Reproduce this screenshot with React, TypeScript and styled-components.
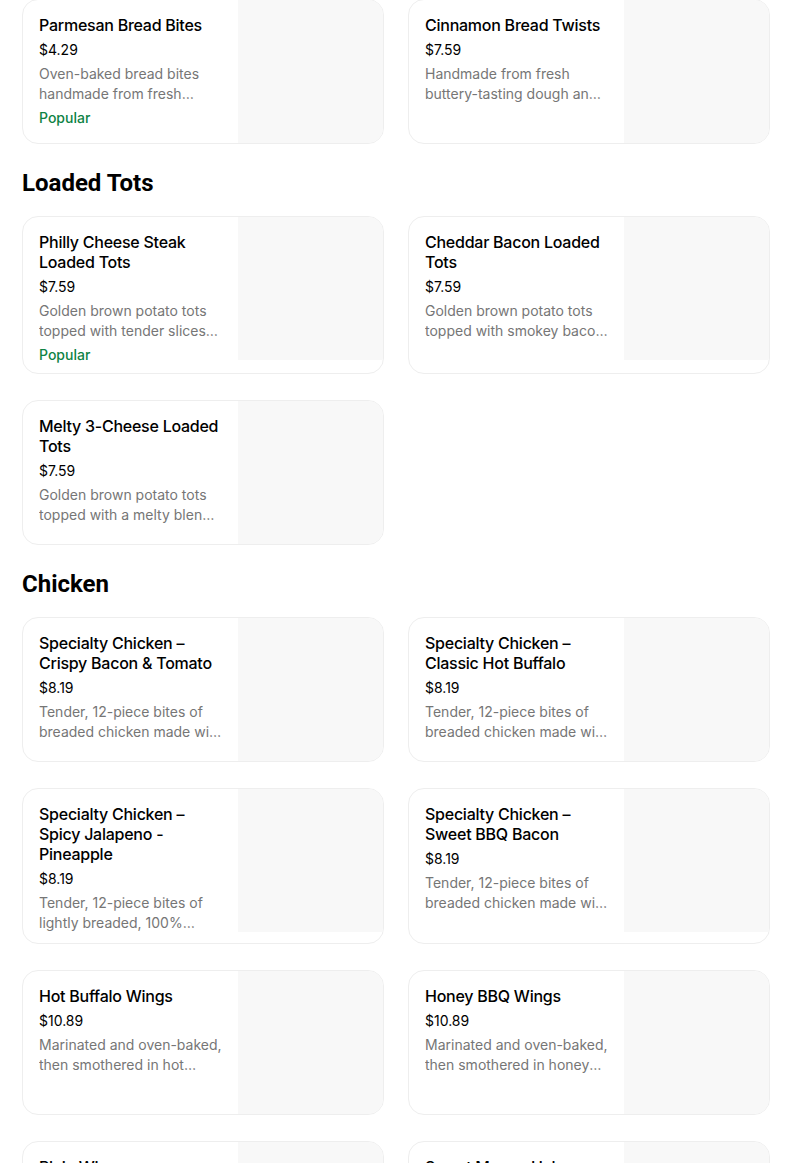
import styled, { createGlobalStyle } from "styled-components";

type Item = {
  name: string;
  price: string;
  description: string;
  popular?: boolean;
};

type Section = {
  title?: string;
  items: Item[];
};

const menu: Section[] = [
  {
    items: [
      {
        name: "Parmesan Bread Bites",
        price: "$4.29",
        description:
          "Oven-baked bread bites handmade from fresh dough, topped with garlic and parmesan.",
        popular: true,
      },
      {
        name: "Cinnamon Bread Twists",
        price: "$7.59",
        description:
          "Handmade from fresh buttery-tasting dough and baked to a golden brown.",
      },
    ],
  },
  {
    title: "Loaded Tots",
    items: [
      {
        name: "Philly Cheese Steak Loaded Tots",
        price: "$7.59",
        description:
          "Golden brown potato tots topped with tender slices of steak, onions and green peppers.",
        popular: true,
      },
      {
        name: "Cheddar Bacon Loaded Tots",
        price: "$7.59",
        description:
          "Golden brown potato tots topped with smokey bacon, cheddar cheese and ranch.",
      },
      {
        name: "Melty 3-Cheese Loaded Tots",
        price: "$7.59",
        description:
          "Golden brown potato tots topped with a melty blend of three cheeses.",
      },
    ],
  },
  {
    title: "Chicken",
    items: [
      {
        name: "Specialty Chicken – Crispy Bacon & Tomato",
        price: "$8.19",
        description:
          "Tender, 12-piece bites of breaded chicken made with 100% white meat, topped with bacon.",
      },
      {
        name: "Specialty Chicken – Classic Hot Buffalo",
        price: "$8.19",
        description:
          "Tender, 12-piece bites of breaded chicken made with 100% white meat, hot buffalo sauce.",
      },
      {
        name: "Specialty Chicken – Spicy Jalapeno - Pineapple",
        price: "$8.19",
        description:
          "Tender, 12-piece bites of lightly breaded, 100% whole white meat chicken.",
      },
      {
        name: "Specialty Chicken – Sweet BBQ Bacon",
        price: "$8.19",
        description:
          "Tender, 12-piece bites of breaded chicken made with 100% white meat, sweet BBQ sauce.",
      },
      {
        name: "Hot Buffalo Wings",
        price: "$10.89",
        description:
          "Marinated and oven-baked, then smothered in hot buffalo sauce.",
      },
      {
        name: "Honey BBQ Wings",
        price: "$10.89",
        description:
          "Marinated and oven-baked, then smothered in honey BBQ sauce.",
      },
      {
        name: "Plain Wings",
        price: "$10.89",
        description: "Marinated and oven-baked to perfection.",
      },
      {
        name: "Sweet Mango Habanero Wings",
        price: "$10.89",
        description:
          "Marinated and oven-baked, then smothered in sweet mango habanero sauce.",
      },
    ],
  },
];

const GlobalStyle = createGlobalStyle`
  html, body {
    margin: 0;
    padding: 0;
    background: #ffffff;
    overflow: hidden;
  }
  body {
    font-family: Inter, "Noto Sans", Arial, sans-serif;
    color: #000000;
    -webkit-font-smoothing: antialiased;
  }
`;

const Page = styled.div`
  padding: 0 22px;
  margin-top: -1px;
  height: 1164px;
  overflow: hidden;
`;

const SectionBlock = styled.section`
  display: flex;
  flex-direction: column;
`;

const Heading = styled.h2`
  margin: 25px 0 19px;
  font-family: Roboto, Arial, sans-serif;
  font-size: 24px;
  line-height: 28px;
  font-weight: 700;
  color: #000000;
`;

const Grid = styled.div`
  display: grid;
  grid-template-columns: 362px 362px;
  column-gap: 24px;
  row-gap: 26px;
`;

const Card = styled.div`
  display: flex;
  align-items: flex-start;
  border: 1px solid #eeeeee;
  border-radius: 16px;
  overflow: hidden;
  background: #ffffff;
`;

const Info = styled.div`
  flex: 1;
  min-width: 0;
  padding: 15px 16px 10px 16px;
`;

const Name = styled.div`
  font-size: 16px;
  line-height: 20px;
  font-weight: 500;
  letter-spacing: -0.25px;
  color: #000000;
`;

const Price = styled.div`
  margin-top: 5px;
  font-size: 14px;
  line-height: 20px;
  color: #000000;
`;

const Description = styled.div`
  margin-top: 4px;
  font-size: 14px;
  line-height: 20px;
  color: #767676;
  display: -webkit-box;
  -webkit-line-clamp: 2;
  -webkit-box-orient: vertical;
  overflow: hidden;
`;

const Badge = styled.div`
  margin-top: 6px;
  font-size: 14px;
  line-height: 16px;
  font-weight: 500;
  color: #0e8345;
`;

const Photo = styled.div`
  flex-shrink: 0;
  width: 145px;
  height: 143px;
  background: #f8f8f8;
`;

const MenuCard = ({ item }: { item: Item }) => (
  <Card>
    <Info>
      <Name>{item.name}</Name>
      <Price>{item.price}</Price>
      <Description>{item.description}</Description>
      {item.popular && <Badge>Popular</Badge>}
    </Info>
    <Photo />
  </Card>
);

export default function App() {
  return (
    <>
      <GlobalStyle />
      <Page>
        {menu.map((section, idx) => (
          <SectionBlock key={idx.toString()}>
            {section.title && <Heading>{section.title}</Heading>}
            <Grid>
              {section.items.map((item, i) => (
                <MenuCard key={i.toString()} item={item} />
              ))}
            </Grid>
          </SectionBlock>
        ))}
      </Page>
    </>
  );
}
